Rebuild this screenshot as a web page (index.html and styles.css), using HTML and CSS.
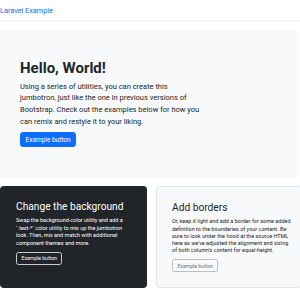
FILE: index.html
```html
<!DOCTYPE html>
<html lang="en">
<head>
<meta charset="UTF-8" />
<meta name="viewport" content="width=device-width, initial-scale=1" />
<title>Laravel Example</title>
<link rel="stylesheet" href="styles.css">
</head>
<body>
  <nav class="navbar">
    <a class="brand" href="#">Laravel Example</a>
  </nav>

  <main class="page">
    <section class="jumbotron">
      <h1>Hello, World!</h1>
      <p>Using a series of utilities, you can create this jumbotron, just like the one in previous versions of Bootstrap. Check out the examples below for how you can remix and restyle it to your liking.</p>
      <button class="btn btn-primary" type="button">Example button</button>
    </section>

    <div class="row">
      <section class="card card-dark">
        <h2>Change the background</h2>
        <p>Swap the background-color utility and add a `.text-*` color utility to mix up the jumbotron look. Then, mix and match with additional component themes and more.</p>
        <button class="btn btn-outline-light" type="button">Example button</button>
      </section>
      <section class="card card-light">
        <h2>Add borders</h2>
        <p>Or, keep it light and add a border for some added definition to the boundaries of your content. Be sure to look under the hood at the source HTML here as we've adjusted the alignment and sizing of both column's content for equal-height.</p>
        <button class="btn btn-outline-secondary" type="button">Example button</button>
      </section>
    </div>
  </main>
</body>
</html>
```

FILE: styles.css
```css
/* Base */
* {
  box-sizing: border-box;
}
body {
  margin: 0;
  font-family: Roboto, 'Liberation Sans', Arial, sans-serif;
  color: #212529;
  background: #fff;
  overflow: hidden;
}
/* Navbar */
.navbar {
  height: 21px;
  padding-top: 1px;
  border-bottom: 1px solid #eceef0;
  display: flex;
  align-items: center;
}
.brand {
  font-size: 7.3px;
  color: #0d6efd;
  text-decoration: none;
}
/* Page */
.page {
  padding-top: 9px;
}
/* Jumbotron */
.jumbotron {
  width: 299px;
  height: 148px;
  padding: 29px 20px 0 20px;
  background-color: #f8f9fa;
  border-radius: 4px;
}
.jumbotron h1 {
  font-size: 15px;
  font-weight: 700;
  line-height: 1.25;
  margin: 0 0 3px 0;
}
.jumbotron p {
  font-size: 7.5px;
  line-height: 11.6px;
  max-width: 180px;
  margin: 0 0 5px 0;
}
/* Buttons */
.btn {
  font-family: inherit;
  display: block;
  border: 1px solid transparent;
  border-radius: 3px;
  cursor: pointer;
}
.btn-primary {
  font-size: 6.5px;
  padding: 0 4.5px;
  height: 15px;
  color: #fff;
  background-color: #0d6efd;
  border-color: #0d6efd;
}
.btn-outline-light,
.btn-outline-secondary {
  font-size: 5.1px;
  padding: 0 4.5px;
  height: 13px;
  background: transparent;
  border-radius: 2.5px;
}
.btn-outline-light {
  color: #f8f9fa;
  border-color: #c9cbcd;
}
.btn-outline-secondary {
  color: #6c757d;
  border-color: #b9bdc1;
}
/* Cards */
.row {
  display: grid;
  grid-template-columns: 147px 147px;
  gap: 9px;
  margin-top: 8px;
}
.card {
  height: 102px;
  padding: 15px 23px 0 16px;
  border-radius: 4px;
}
.card h2 {
  font-size: 10.2px;
  font-weight: 400;
  line-height: 1.2;
  margin: 0 0 4px 0;
}
.card p {
  font-size: 5.5px;
  line-height: 7.5px;
  margin: 0 0 4.5px 0;
}
.card-dark {
  background-color: #212529;
  color: #fff;
}
.card-light {
  background-color: #f8f9fa;
  border: 1px solid #e3e6e8;
  padding-left: 15px;
  padding-right: 11px;
}
.card-light p {
  line-height: 7.3px;
}
```
